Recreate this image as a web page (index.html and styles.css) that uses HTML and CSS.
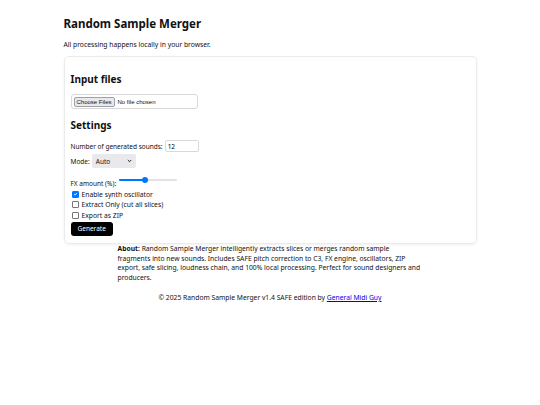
FILE: index.html
```html
<!DOCTYPE html>
<html lang="en">
<head>
    <meta charset="UTF-8">
    <title>Random Sample Merger</title>
    <meta name="viewport" content="width=device-width, initial-scale=1">
    <link rel="stylesheet" href="styles.css">
</head>
<body>
    <div class="page">
        <h1>Random Sample Merger</h1>
        <p class="lead">All processing happens locally in your browser.</p>

        <div class="card">
            <h2>Input files</h2>
            <div class="file-box">
                <span class="file-btn">Choose Files</span>
                <span class="file-name">No file chosen</span>
            </div>

            <h2 class="settings">Settings</h2>
            <div class="row">
                <label for="count">Number of generated sounds:</label>
                <input id="count" class="num" type="text" value="12">
            </div>
            <div class="row">
                <label for="mode">Mode:</label>
                <span class="select" id="mode">Auto
                    <svg width="5" height="4" viewBox="0 0 5 4"><path d="M0.8 1l1.7 1.7 1.7-1.7" fill="none" stroke="#222" stroke-width="1"/></svg>
                </span>
            </div>
            <div class="row fx">
                <label>FX amount (%):</label>
                <span class="range"><span class="range-fill"></span><span class="range-thumb"></span></span>
            </div>
            <label class="check"><span class="box on"><svg width="6" height="6" viewBox="0 0 6 6"><path d="M1.3 3.1l1.2 1.2 2.2-2.6" fill="none" stroke="#fff" stroke-width="1"/></svg></span>Enable synth oscillator</label>
            <label class="check"><span class="box"></span>Extract Only (cut all slices)</label>
            <label class="check"><span class="box"></span>Export as ZIP</label>
            <button class="generate">Generate</button>
        </div>

        <p class="about"><b>About:</b> Random Sample Merger intelligently extracts slices or merges random sample fragments into new sounds. Includes SAFE pitch correction to C3, FX engine, oscillators, ZIP export, safe slicing, loudness chain, and 100% local processing. Perfect for sound designers and producers.</p>

        <p class="footer">© 2025 Random Sample Merger v1.4 SAFE edition by <a href="#">General Midi Guy</a></p>
    </div>
</body>
</html>
```

FILE: styles.css
```css
body {
    margin: 0px;
    padding: 0px;
    font-family: 'Noto Sans', sans-serif;
    font-size: 6.75px;
    color: #111;
    background: #fff;
}

.page {
    width: 413px;
    margin: 0px auto;
    padding-top: 15px;
}

h1 {
    font-size: 11.5px;
    font-weight: 700;
    line-height: 17px;
    margin: 0px 0px 8px 0px;
}

h2 {
    font-size: 10px;
    font-weight: 700;
    line-height: 14px;
    margin: 0px 0px 8px 0px;
}

.lead {
    margin: 0px 0px 6px 0px;
    line-height: 10px;
}

/* カード */
.card {
    border: 1px solid #ebebeb;
    border-radius: 5px;
    box-shadow: 0 1px 3px rgba(0, 0, 0, 0.06);
    padding: 15px 6px 7px 6px;
}

.file-box {
    display: flex;
    align-items: center;
    gap: 3px;
    width: 121px;
    height: 13px;
    padding: 0px 2px;
    border: 1px solid #d9d9d9;
    border-radius: 3px;
    font-family: 'Liberation Sans', Arial, sans-serif;
    font-size: 6px;
    margin-bottom: 9px;
}

.file-btn {
    background: #e9e9ed;
    border: 1px solid #a0a0aa;
    border-radius: 2px;
    padding: 0px 2px;
    line-height: 8px;
}

.row {
    display: flex;
    align-items: center;
    gap: 2px;
    margin-bottom: 1px;
    height: 14px;
    font-size: 6.5px;
}

.settings {
    margin-bottom: 7px;
}

.num {
    width: 28px;
    height: 10px;
    padding: 0px 2px;
    border: 1px solid #d9d9d9;
    border-radius: 2px;
    font-family: 'Noto Sans', sans-serif;
    font-size: 6.5px;
    outline: none;
}

.select {
    display: flex;
    align-items: center;
    justify-content: space-between;
    width: 36px;
    height: 14px;
    padding: 0px 4px;
    background: #e9e9ed;
    border-radius: 2px;
    font-family: 'Noto Sans', sans-serif;
    font-size: 6.5px;
}

.fx {
    height: 14px;
    margin-top: 6px;
    margin-bottom: 1px;
    align-items: flex-end;
    gap: 3px;
}

.range {
    position: relative;
    width: 58px;
    height: 2px;
    background: #e2e2e2;
    border-radius: 1px;
    align-self: flex-start;
    margin-top: 5px;
}

.range-fill {
    display: block;
    width: 26px;
    height: 2px;
    background: #0075ff;
    border-radius: 1px;
}

.range-thumb {
    position: absolute;
    left: 23px;
    top: -2px;
    width: 6px;
    height: 6px;
    border-radius: 50%;
    background: #0075ff;
}

.check {
    display: flex;
    align-items: center;
    gap: 3px;
    height: 10.5px;
}

.box {
    display: flex;
    align-items: center;
    justify-content: center;
    width: 5px;
    height: 5px;
    margin-left: 1px;
    border: 0.6px solid #767676;
    border-radius: 1px;
    background: #fff;
}

.box.on {
    background: #0075ff;
    border-color: #0075ff;
}

.generate {
    margin-top: 1px;
    background: #000;
    color: #fff;
    border: none;
    border-radius: 3px;
    height: 14.5px;
    padding: 0px 7px;
    font-family: 'Noto Sans', sans-serif;
    font-size: 6.5px;
}

.about {
    width: 305px;
    margin: 0px auto;
    line-height: 9.5px;
}

.footer {
    text-align: center;
    margin: 11px 0px 0px 0px;
}

a {
    color: #0000ee;
}
```
